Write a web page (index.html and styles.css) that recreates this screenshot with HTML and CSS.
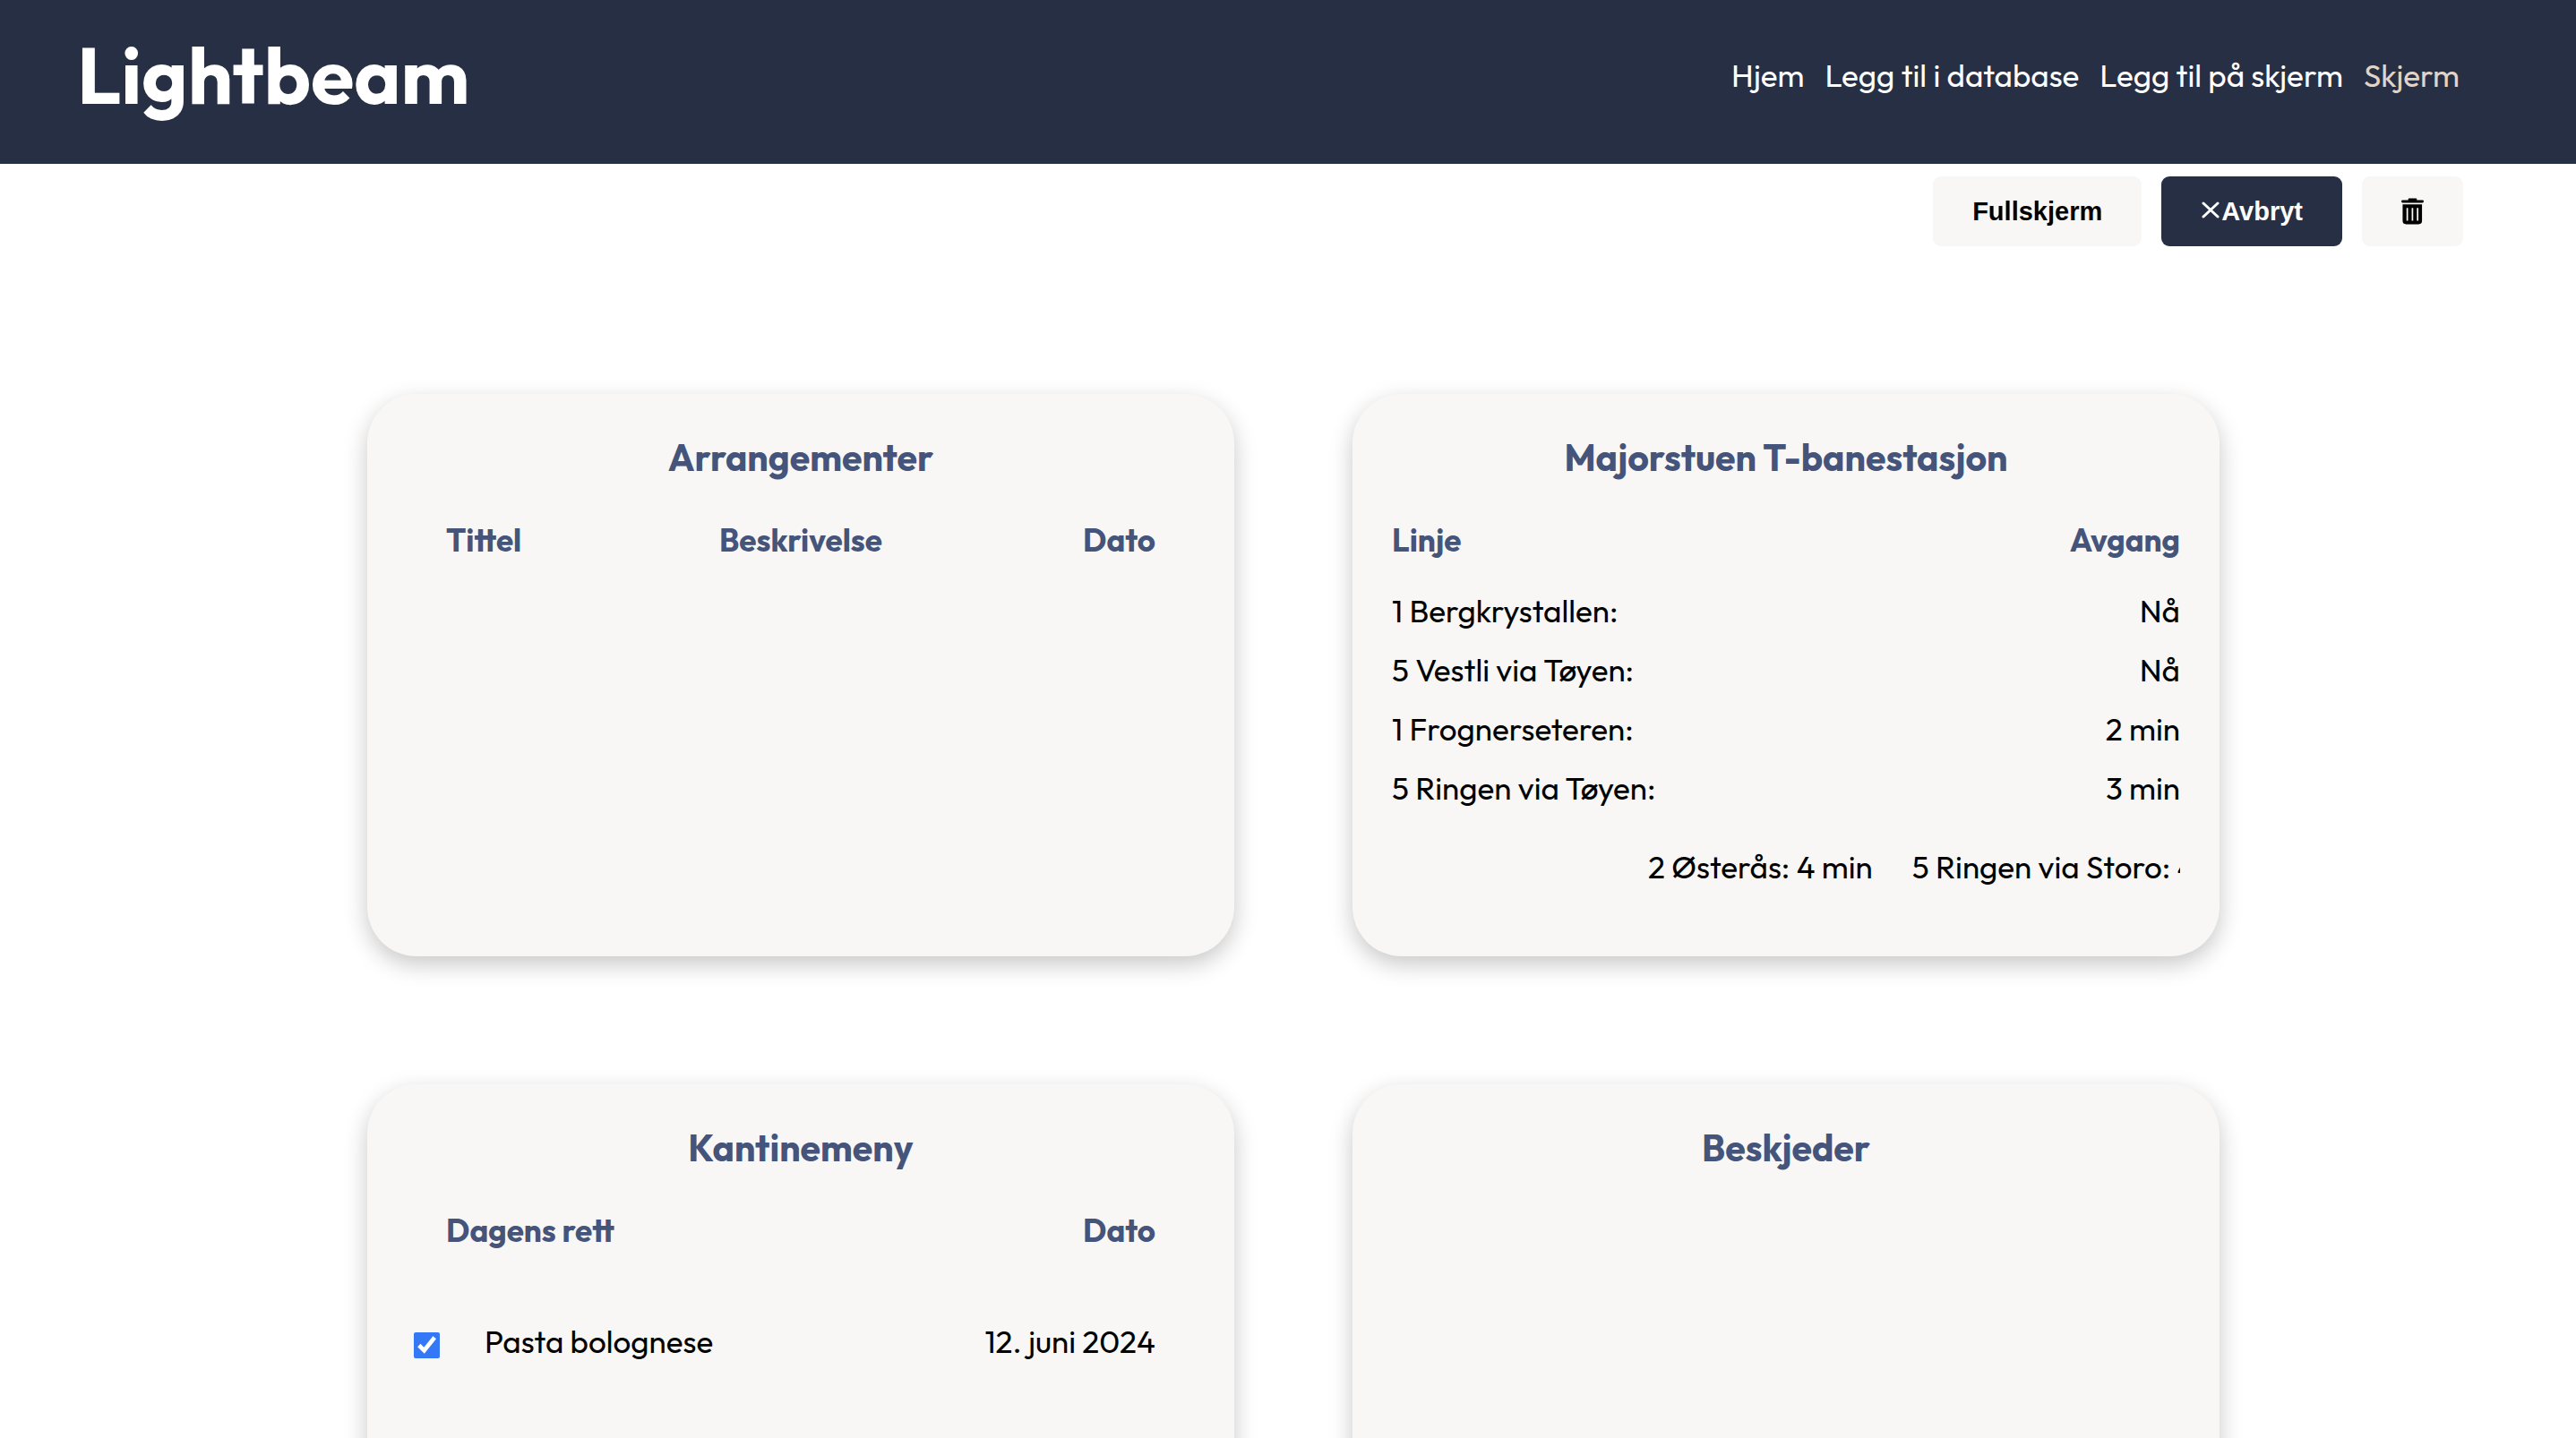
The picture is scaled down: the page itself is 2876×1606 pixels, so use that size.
FILE: index.html
```html
<!DOCTYPE html>
<html lang="no">
<head>
<meta charset="utf-8">
<meta name="viewport" content="width=device-width, initial-scale=1">
<title>Lightbeam</title>
<link rel="stylesheet" href="styles.css">
</head>
<body>
<header class="header">
  <h1 class="logo">Lightbeam</h1>
  <nav class="nav">
    <a href="#hjem">Hjem</a>
    <a href="#database">Legg til i database</a>
    <a href="#legg-til">Legg til på skjerm</a>
    <a href="#skjerm" class="active">Skjerm</a>
  </nav>
</header>
<main>
  <div class="toolbar">
    <button type="button" class="btn">Fullskjerm</button>
    <button type="button" class="btn btn-dark">
      <svg class="icon-x" viewBox="0 0 23 22" aria-hidden="true"><path d="M3 2l16 15M19 2L3 17"/></svg>Avbryt
    </button>
    <button type="button" class="btn" aria-label="Slett">
      <svg class="icon-trash" viewBox="0 0 26 30" aria-hidden="true"><path fill-rule="evenodd" d="M9 0h8a1 1 0 0 1 1 1v1h6.500a1.500 1.500 0 0 1 0 3h-23a1.500 1.500 0 0 1 0-3H8V1a1 1 0 0 1 1-1zM1.500 7h22.500v19a4 4 0 0 1-4 4h-14.500a4 4 0 0 1-4-4zM6 11v15h1.800V11zM12 11v15h1.800V11zM18 11v15h1.800V11z"/></svg>
    </button>
  </div>
  <div class="cards">
    <section class="card">
      <h2>Arrangementer</h2>
      <table class="table inset">
        <thead><tr><th>Tittel</th><th class="mid">Beskrivelse</th><th>Dato</th></tr></thead>
      </table>
    </section>
    <section class="card">
      <h2>Majorstuen T-banestasjon</h2>
      <table class="table">
        <thead><tr><th>Linje</th><th>Avgang</th></tr></thead>
        <tbody>
          <tr><td>1 Bergkrystallen:</td><td>Nå</td></tr>
          <tr><td>5 Vestli via Tøyen:</td><td>Nå</td></tr>
          <tr><td>1 Frognerseteren:</td><td>2 min</td></tr>
          <tr><td>5 Ringen via Tøyen:</td><td>3 min</td></tr>
        </tbody>
      </table>
      <div class="ticker"><span>2 Østerås: 4 min</span><span>5 Ringen via Storo: 4 min</span></div>
    </section>
    <section class="card">
      <h2>Kantinemeny</h2>
      <div class="list-head"><span>Dagens rett</span><span>Dato</span></div>
      <div class="list-row">
        <input type="checkbox" id="rett-1" checked>
        <label for="rett-1">Pasta bolognese</label>
        <span>12. juni 2024</span>
      </div>
    </section>
    <section class="card">
      <h2>Beskjeder</h2>
    </section>
  </div>
</main>
</body>
</html>
```
FILE: styles.css
```css
* { box-sizing: border-box; }

body {
  margin: 0;
  background: #fff;
  color: #000;
  font-family: Outfit, Lato, sans-serif;
  font-size: 35px;
  line-height: 44px;
}

.header {
  display: flex;
  align-items: center;
  justify-content: space-between;
  padding: 28px 130px 43px 86px;
  background: #272f44;
  color: #fff;
}

.logo {
  margin: 0;
  font-size: 88px;
  line-height: 112px;
  font-weight: 700;
}

.nav { display: flex; gap: 23px; }
.nav a { color: #fff; text-decoration: none; }
.nav .active { color: #e2d3c7; }

.toolbar {
  display: flex;
  justify-content: flex-end;
  gap: 22px;
  padding: 14px 126px 0;
}

.btn {
  display: flex;
  align-items: center;
  height: 78px;
  padding: 0 44px;
  border: 0;
  border-radius: 9px;
  background: #f8f7f5;
  color: #000;
  font: bold 29px "Liberation Sans", Arial, sans-serif;
}
.btn-dark { background: #272f44; color: #fff; }

.icon-x { width: 23px; height: 22px; fill: none; stroke: currentColor; stroke-width: 3; stroke-linecap: round; }
.icon-trash { width: 25px; height: 30px; fill: currentColor; }

.cards {
  display: grid;
  grid-template-columns: repeat(2, minmax(0, 1fr));
  gap: 143px 132px;
  padding: 165px 398px 140px 410px;
}

.card {
  min-height: 628px;
  padding: 44px;
  border-radius: 55px;
  background: #f8f7f5;
  box-shadow: 0 9px 26px rgba(0, 0, 0, 0.22);
}

.card h2 {
  margin: 0 0 43px;
  color: #45547a;
  font-size: 41px;
  line-height: 54px;
  text-align: center;
}

.table { width: 100%; border-collapse: collapse; }
.table.inset { width: calc(100% - 88px); margin: 0 44px; table-layout: fixed; }
.table th {
  padding: 0 0 35px;
  color: #45547a;
  text-align: left;
}
.table td { padding: 0 0 22px; }
.table .mid { text-align: center; }
.table th:last-child, .table td:last-child { text-align: right; }

.ticker {
  display: flex;
  gap: 44px;
  margin-top: 22px;
  padding-left: 286px;
  overflow: hidden;
  white-space: nowrap;
}

.list-head {
  display: flex;
  justify-content: space-between;
  padding: 0 44px;
  color: #45547a;
  font-weight: 700;
}

.list-row {
  display: flex;
  align-items: center;
  padding: 80px 44px 0 8px;
}
.list-row input {
  width: 29px;
  height: 29px;
  margin: 8px 50px 0 0;
  accent-color: #3478f6;
}
.list-row span { margin-left: auto; }
```
